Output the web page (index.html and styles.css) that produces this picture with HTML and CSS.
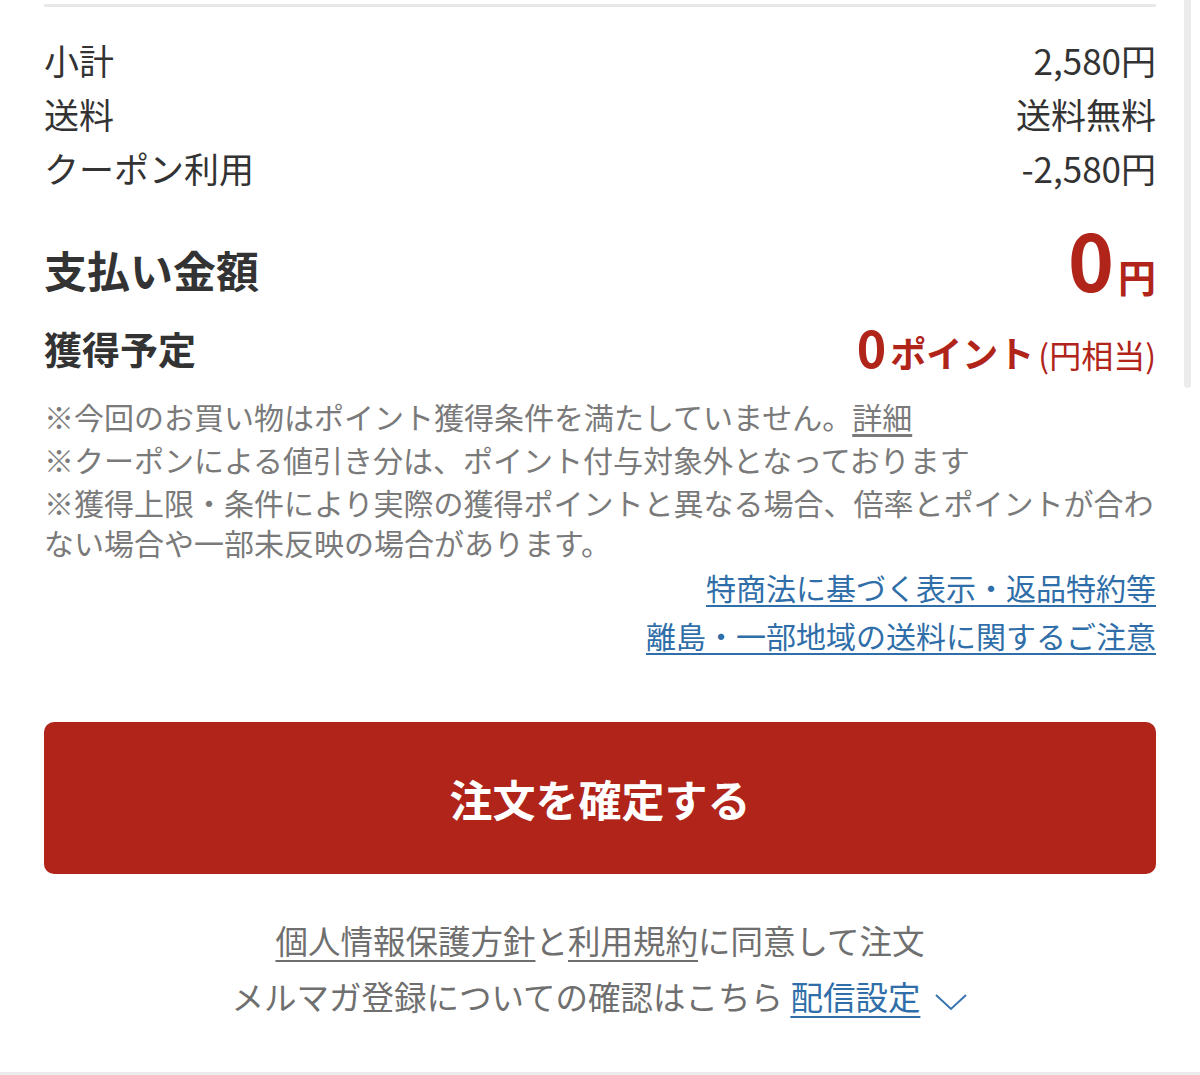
FILE: index.html
```html
<!DOCTYPE html>
<html lang="ja">
<head>
<meta charset="utf-8">
<link rel="stylesheet" href="styles.css">
</head>
<body>
<div class="page">
  <div class="scrollbar"></div>
  <div class="content">
    <div class="topline"></div>
    <div class="rows">
      <div class="row"><span>小計</span><span>2,580円</span></div>
      <div class="row"><span>送料</span><span>送料無料</span></div>
      <div class="row"><span>クーポン利用</span><span>-2,580円</span></div>
    </div>
    <div class="total">
      <span class="total-label">支払い金額</span>
      <span class="total-val"><span class="big">0</span><span class="yen">円</span></span>
    </div>
    <div class="points">
      <span class="points-label">獲得予定</span>
      <span class="points-val"><span class="pnum">0</span><span class="pword">ポイント</span><span class="pnote">(円相当)</span></span>
    </div>
    <div class="notes">
      <p>※今回のお買い物はポイント獲得条件を満たしていません。<a class="detail" href="#">詳細</a></p>
      <p>※クーポンによる値引き分は、ポイント付与対象外となっております</p>
      <p>※獲得上限・条件により実際の獲得ポイントと異なる場合、倍率とポイントが合わない場合や一部未反映の場合があります。</p>
    </div>
    <div class="links">
      <a href="#">特商法に基づく表示・返品特約等</a>
      <a href="#">離島・一部地域の送料に関するご注意</a>
    </div>
    <button class="confirm" type="button">注文を確定する</button>
    <div class="agree">
      <p><a class="gray-link" href="#">個人情報保護方針</a>と<a class="gray-link" href="#">利用規約</a>に同意して注文</p>
      <p>メルマガ登録についての確認はこちら <a class="blue-link" href="#">配信設定</a><svg class="chev" width="34" height="20" viewBox="0 0 34 20"><polyline points="2,3 17,17 32,3" fill="none" stroke="#3a74b0" stroke-width="2"/></svg></p>
    </div>
  </div>
</div>
</body>
</html>
```

FILE: styles.css
```css
* { box-sizing: border-box; }
html, body { margin: 0; padding: 0; background: #fff; }
body {
  font-family: "Noto Sans CJK JP", "Noto Sans", sans-serif;
  color: #333;
}
.page {
  position: relative;
  width: 1200px;
  height: 1075px;
  overflow: hidden;
  border-bottom: 3px solid #ececec;
}
.scrollbar {
  position: absolute;
  top: 0;
  left: 1184px;
  width: 7px;
  height: 388px;
  background: #ececec;
  border-radius: 0 0 4px 4px;
}
.content {
  padding: 4px 44px 0;
  display: flex;
  flex-direction: column;
}
.topline {
  height: 3px;
  background: #e8e8e8;
}
.rows {
  padding-top: 26px;
  display: flex;
  flex-direction: column;
}
.row {
  display: flex;
  justify-content: space-between;
  font-size: 35px;
  line-height: 54px;
  height: 54px;
}
.total {
  margin-top: 34px;
  height: 80px;
  display: flex;
  justify-content: space-between;
  align-items: center;
}
.total-label {
  font-size: 43px;
  font-weight: 700;
}
.total-val {
  color: #b0241a;
  font-weight: 700;
  display: flex;
  align-items: baseline;
  margin-bottom: 18px;
}
.big { font-size: 78px; line-height: 80px; }
.yen { font-size: 38px; margin-left: 4px; }
.points {
  height: 76px;
  display: flex;
  justify-content: space-between;
  align-items: center;
}
.points-label {
  font-size: 38px;
  font-weight: 700;
}
.points-val {
  color: #b0241a;
  display: flex;
  align-items: baseline;
}
.pnum { font-size: 50px; font-weight: 700; line-height: 60px; }
.pword { font-size: 36px; font-weight: 700; margin-left: 4px; }
.pnote { font-size: 32px; margin-left: 4px; }
.notes {
  margin-top: 11px;
  color: #7a7a7a;
  font-size: 30px;
  line-height: 40px;
}
.notes p { margin: 0 0 3px; }
.detail {
  color: #7a7a7a;
  text-decoration: underline;
  text-underline-offset: 5px;
}
.links {
  margin-top: -2px;
  display: flex;
  flex-direction: column;
  align-items: flex-end;
  font-size: 30px;
  line-height: 48px;
}
.links a {
  color: #2f6ea8;
  text-decoration: underline;
  text-underline-offset: 5px;
  text-decoration-thickness: 2px;
}
.confirm {
  margin-top: 63px;
  height: 152px;
  width: 100%;
  border: none;
  border-radius: 10px;
  background: #b0241a;
  color: #fff;
  font-family: "Noto Sans CJK JP", "Noto Sans", sans-serif;
  font-size: 43px;
  font-weight: 700;
  padding: 0;
}
.agree {
  margin-top: 38px;
  text-align: center;
  color: #6f6f6f;
  font-size: 32.5px;
  line-height: 56px;
}
.agree p { margin: 0; }
.gray-link {
  color: #6f6f6f;
  text-decoration: underline;
  text-underline-offset: 6px;
  text-decoration-thickness: 2px;
}
.blue-link {
  color: #2f6ea8;
  text-decoration: underline;
  text-underline-offset: 6px;
  text-decoration-thickness: 2px;
}
.chev {
  margin-left: 14px;
  vertical-align: -2px;
}
```
